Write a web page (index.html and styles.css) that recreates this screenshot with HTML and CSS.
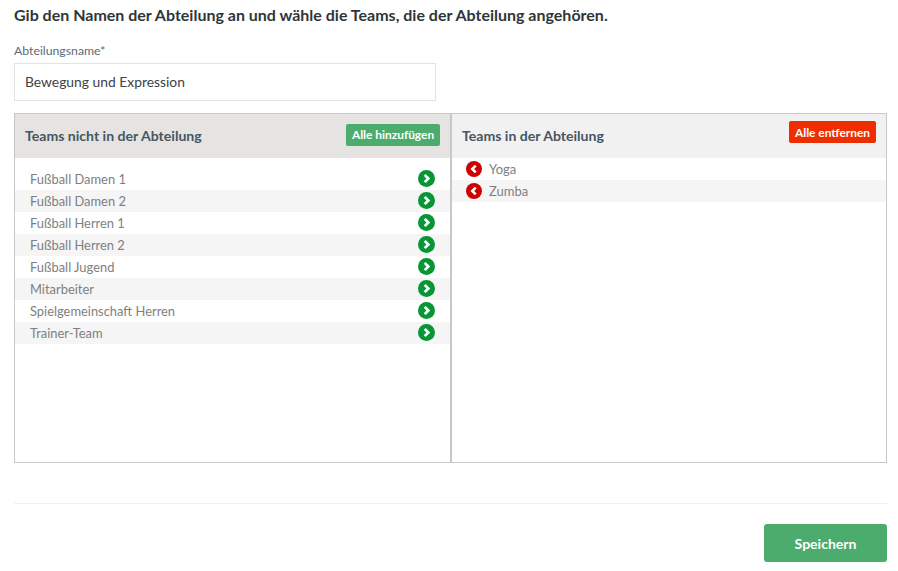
FILE: index.html
```html
<!DOCTYPE html>
<html lang="de">
<head>
<meta charset="utf-8">
<title>Abteilung</title>
<link rel="stylesheet" href="styles.css">
</head>
<body>
<svg class="defs" width="0" height="0" aria-hidden="true">
  <symbol id="right" viewBox="0 0 16 16"><circle cx="8" cy="8" r="8" fill="currentColor"/><path d="M6.3 4.6 9.7 8l-3.4 3.4" fill="none" stroke="#fff" stroke-width="2.6"/></symbol>
  <symbol id="left" viewBox="0 0 16 16"><circle cx="8" cy="8" r="8" fill="currentColor"/><path d="M9.7 4.6 6.3 8l3.4 3.4" fill="none" stroke="#fff" stroke-width="2.6"/></symbol>
</svg>
<main class="page">
  <h1 class="title">Gib den Namen der Abteilung an und wähle die Teams, die der Abteilung angehören.</h1>
  <label class="label" for="name">Abteilungsname*</label>
  <input class="input" id="name" type="text" value="Bewegung und Expression">
  <section class="panels">
    <div class="col col-left">
      <header class="col-head head-left">
        <h2 class="col-title">Teams nicht in der Abteilung</h2>
        <button class="btn btn-add">Alle hinzufügen</button>
      </header>
      <ul class="list list-left">
        <li class="row"><span>Fußball Damen 1</span><svg class="ico go"><use href="#right"/></svg></li>
        <li class="row"><span>Fußball Damen 2</span><svg class="ico go"><use href="#right"/></svg></li>
        <li class="row"><span>Fußball Herren 1</span><svg class="ico go"><use href="#right"/></svg></li>
        <li class="row"><span>Fußball Herren 2</span><svg class="ico go"><use href="#right"/></svg></li>
        <li class="row"><span>Fußball Jugend</span><svg class="ico go"><use href="#right"/></svg></li>
        <li class="row"><span>Mitarbeiter</span><svg class="ico go"><use href="#right"/></svg></li>
        <li class="row"><span>Spielgemeinschaft Herren</span><svg class="ico go"><use href="#right"/></svg></li>
        <li class="row"><span>Trainer-Team</span><svg class="ico go"><use href="#right"/></svg></li>
      </ul>
    </div>
    <div class="col col-right">
      <header class="col-head head-right">
        <h2 class="col-title">Teams in der Abteilung</h2>
        <button class="btn btn-remove">Alle entfernen</button>
      </header>
      <ul class="list">
        <li class="row row-in"><svg class="ico back"><use href="#left"/></svg><span>Yoga</span></li>
        <li class="row row-in"><svg class="ico back"><use href="#left"/></svg><span>Zumba</span></li>
      </ul>
    </div>
  </section>
  <hr class="rule">
  <footer class="foot"><button class="btn-save">Speichern</button></footer>
</main>
</body>
</html>
```
FILE: styles.css
```css
* { box-sizing: border-box; }
html, body { margin: 0; padding: 0; background: #fff; }
body { font-family: Lato, "Liberation Sans", sans-serif; overflow: hidden; }
.defs { position: absolute; }
.page { padding: 5px 11px 0 14px; }
.title { margin: 0 0 19px; font-size: 16px; line-height: 19px; font-weight: 700; color: #2f3639; }
.label { display: block; font-size: 12.25px; line-height: 15px; color: #5a6b75; margin-bottom: 5px; }
.input { display: block; width: 422px; height: 38px; padding: 0 10px 2px; border: 1px solid #e0e3e8; background: #fff; font: 400 13.85px Lato, sans-serif; color: #3d4347; outline: 0; }
.panels { display: flex; height: 350px; margin-top: 12px; border: 1px solid #c8c8c8; }
.col { min-width: 0; }
.col-left { width: 437px; flex: none; border-right: 2px solid #c8c8c8; }
.col-right { flex: 1; }
.col-head { height: 44px; display: flex; justify-content: space-between; }
.head-left { background: #e5e4e2; align-items: center; padding: 0 10px 2px; }
.head-right { background: #f1f1f1; padding: 7px 10px 0; }
.head-right .col-title { margin-top: 6px; }
.col-title { margin: 0; font-size: 14.08px; line-height: 17px; font-weight: 700; color: #47565f; }
.btn { height: 22px; padding: 0; border: 0; border-radius: 2px; color: #fff; font: 700 11.9px Lato, sans-serif; text-align: center; }
.btn-add { width: 94px; background: #4cac6e; margin-top: -1px; }
.btn-remove { width: 87px; background: #ee2e00; }
.list { list-style: none; margin: 0; padding: 0; }
.list-left { padding-top: 10px; }
.row { display: flex; align-items: center; justify-content: space-between; height: 22px; padding: 0 15px 0 15px; font-size: 12.9px; color: #7f7f7f; }
.row:nth-child(even) { background: #f5f5f5; }
.row-in { justify-content: flex-start; gap: 7px; padding: 0 0 0 14px; font-size: 13px; }
.ico { width: 17px; height: 17px; flex: none; margin-top: -2px; }
.go { color: #079536; }
.back { width: 16px; height: 16px; margin-top: 0; color: #cf0000; }
.rule { margin: 40px 0 0; border: 0; border-top: 1px solid #f0f0f0; }
.foot { display: flex; justify-content: flex-end; margin-top: 20px; }
.btn-save { width: 123px; height: 38px; border: 0; border-radius: 3px; background: #4cac6e; color: #fff; font: 700 14px Lato, sans-serif; }
```
